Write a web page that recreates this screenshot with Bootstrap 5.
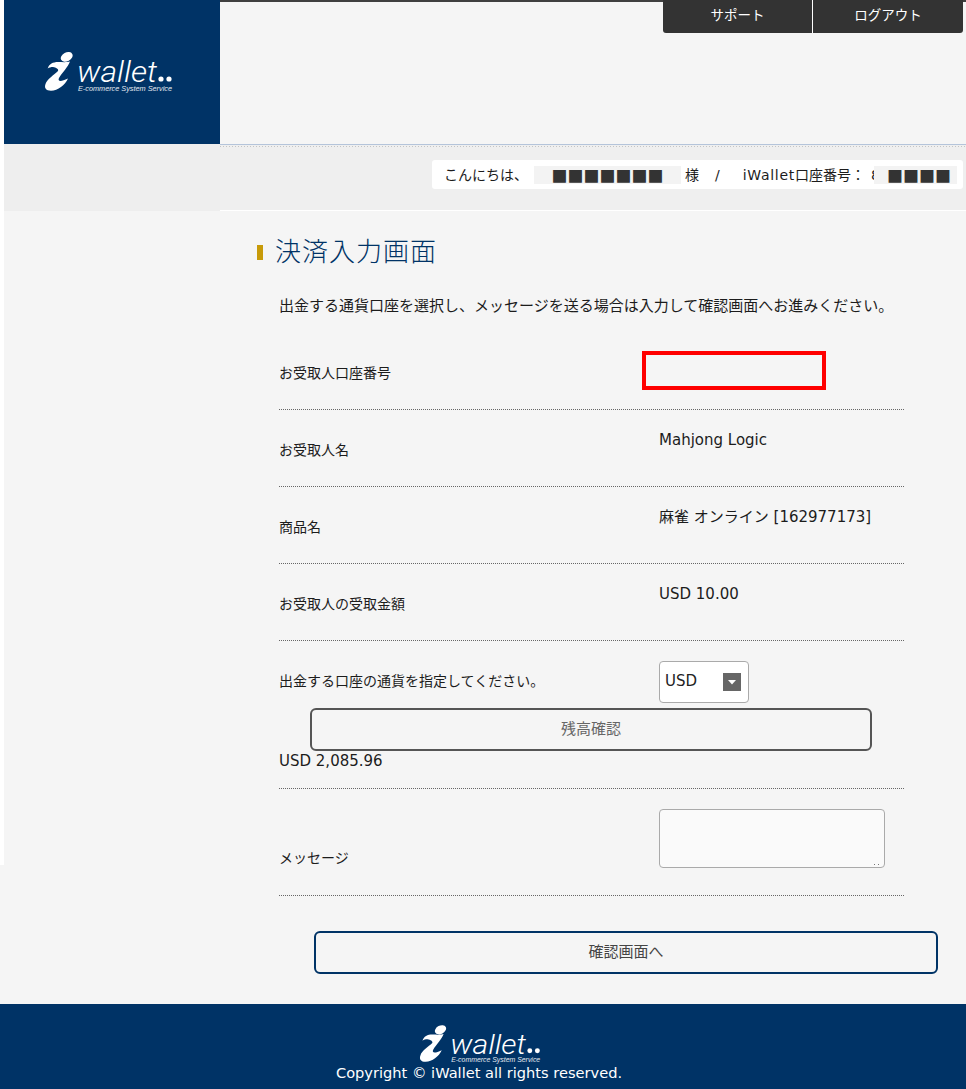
<!DOCTYPE html>
<html lang="ja">
<head>
<meta charset="utf-8">
<title>iWallet</title>
<link href="https://cdn.jsdelivr.net/npm/bootstrap@5.3.0/dist/css/bootstrap.min.css" rel="stylesheet">
<style>
body{background:#f5f5f5;color:#1c1c1c;font-family:"DejaVu Sans","Noto Sans CJK JP",sans-serif;font-size:14px;line-height:20px;position:relative;overflow-x:hidden}
.side-strip{position:absolute;left:0;top:0;width:4px;height:865px;background:#fff}
.logo-box{width:216px;height:144px;margin-left:4px;background:#003366;flex:none}
.logo-box svg{margin:52px 0 0 40px;display:block}
.head-right{border-top:2px solid #404040;height:144px}
.top-btn{width:150px;margin-top:-2px;padding:0;background:#333;color:#fff;border:0;border-radius:0;font-size:13.5px;line-height:31px}
.top-btn:hover{background:#333;color:#fff}
.top-btn:first-child{border-bottom-left-radius:3px;border-right:1px solid #fff}
.top-btn:last-child{border-bottom-right-radius:3px}
.top-btns{height:33px;padding-right:3px}
.top-btns .top-btn{height:33px}
.greet-side{width:216px;margin-left:4px;background:#eee;flex:none}
.greet-main{border-top:1px solid #b4c4da;height:67px;background:repeating-linear-gradient(90deg,#c4c4c4 0 1px,transparent 1px 3px) 0 1px/100% 1px no-repeat,#efefef;border-bottom:1px solid #fff;padding:15px 3px 0 0}
.greet-pill{background:#fff;border-radius:3px;width:531px;height:29px;padding-left:12px;font-size:14px;line-height:28px;white-space:nowrap;overflow:hidden;display:flex;align-items:center}
.mask{display:block;background:#f3f3f3;color:#333;line-height:18px;height:18px;font-size:16px;font-family:"Noto Sans CJK JP",sans-serif;text-align:center;flex:none}
.mask-a{width:147px;margin:0 4px 0 6px}
.mask-b{width:83px;padding-left:7px}
.slash{margin:0 23px 0 16px}
.brand-acct{letter-spacing:.7px}
.cut-digit{display:block;width:3px;overflow:hidden;margin-left:6px}
.content-area{padding-left:257px}
.page-title{display:flex;align-items:center;margin:0;height:30px;margin-top:26px;font-size:26px;font-weight:300;color:#003366;line-height:30px;letter-spacing:1px}
.page-title::before{content:"";width:6px;height:15px;background:#c79a08;margin-right:12px}
.intro{margin:29px 0 0 22px;font-size:15px;line-height:20px;white-space:nowrap;height:37px}
.form-rows{margin-left:22px;width:625px}
.f-row{display:flex;border-bottom:1px dotted #666;height:77px}
.f-row.tall{height:148px;display:block}
.f-row.msg{height:107px}
.f-label{width:380px;flex:none;padding-top:30px}
.msg .f-label{padding-top:59px}
.f-value{padding-top:20px;font-size:15px}
.red-box{width:184px;height:39px;border:4px solid #f00;margin:-2px 0 0 -17px}
.amount-sel{width:90px;height:42px;font-size:15px;padding:0 0 2px 5px;border:1px solid #aaa;border-radius:4px;background-color:#fff;background-position:right 7px center;background-size:18px 18px;background-image:url("data:image/svg+xml,%3csvg xmlns='http://www.w3.org/2000/svg' viewBox='0 0 18 18'%3e%3crect width='18' height='18' fill='%23666'/%3e%3cpath d='M5 7h8l-4 4.5z' fill='%23fff'/%3e%3c/svg%3e");color:#222}
.check-btn{display:block;width:562px;height:43px;margin:5px 0 0 31px;background:transparent;border:2px solid #555;border-radius:6px;color:#666;font-size:15px;padding:0}
.bal-amt{font-size:15px}
.note-wrap{position:relative;width:226px}
.note-wrap::after{content:"";position:absolute;right:6px;bottom:3px;width:1px;height:1px;background:#777;box-shadow:-4px 0 #777}
.note-box{width:226px;height:59px;background:#fafafa;border:1px solid #aaa;border-radius:4px;padding:4px;resize:none}
.go-wrap{padding:35px 0 30px 314px}
.go-btn{display:block;width:624px;height:43px;background:transparent;border:2px solid #003366;border-radius:6px;color:#444;font-size:15px;padding:0}
.site-foot{background:#003366;height:85px;color:#fff;text-align:center;padding-top:21px;font-size:14.6px;line-height:20px}
.site-foot svg{display:block;margin:0 auto -2px 419px}
.copy-line{padding-right:8px}
.logo-w{font-family:Roboto,"Liberation Sans",sans-serif;font-style:italic;font-weight:300;fill:#fff}
.logo-t{font-family:"Liberation Sans",sans-serif;font-style:italic;fill:#e4e9f0}
</style>
</head>
<body>
<div class="side-strip"></div>
<header class="d-flex">
  <div class="logo-box">
    <svg width="132" height="42" viewBox="0 0 132 42">
      <ellipse cx="22.7" cy="4.9" rx="6.3" ry="4.4" transform="rotate(-28 22.7 4.9)" fill="#fff"/>
      <path d="M3.7 16.5C5 12 9 10 14 10C18 10 23 10.5 26 9.5C24 15 18 21 15 26C13.5 29 16 30.5 24 26.5C21 33 14 38.7 7 38.7C2 38.7 0 36 1.5 32C3 27 10 23 14 19C15 17 12 15.5 9 15C7 15 5 15.5 3.7 16.5Z" fill="#fff"/>
      <text class="logo-w" x="33" y="30" font-size="30" textLength="80" lengthAdjust="spacingAndGlyphs">wallet</text>
      <circle cx="117" cy="27" r="2.6" fill="#fff"/><circle cx="125" cy="27" r="2.6" fill="#fff"/>
      <text class="logo-t" x="34" y="39" font-size="8" textLength="94" lengthAdjust="spacingAndGlyphs">E-commerce System Service</text>
    </svg>
  </div>
  <div class="head-right flex-grow-1">
    <div class="top-btns d-flex justify-content-end">
      <a class="btn top-btn" href="#">サポート</a>
      <a class="btn top-btn" href="#">ログアウト</a>
    </div>
  </div>
</header>
<div class="d-flex">
  <div class="greet-side"></div>
  <div class="greet-main flex-grow-1 d-flex justify-content-end">
    <div class="greet-pill"><span>こんにちは、</span><span class="mask mask-a">■■■■■■■</span><span>様</span><span class="slash">/</span><span class="brand-acct">iWallet</span><span>口座番号：</span><span class="cut-digit">8</span><span class="mask mask-b">■■■■</span></div>
  </div>
</div>
<main class="content-area">
  <h1 class="page-title">決済入力画面</h1>
  <p class="intro">出金する通貨口座を選択し、メッセージを送る場合は入力して確認画面へお進みください。</p>
  <div class="form-rows">
    <div class="f-row">
      <div class="f-label">お受取人口座番号</div>
      <div class="f-value"><div class="red-box"></div></div>
    </div>
    <div class="f-row">
      <div class="f-label">お受取人名</div>
      <div class="f-value">Mahjong Logic</div>
    </div>
    <div class="f-row">
      <div class="f-label">商品名</div>
      <div class="f-value">麻雀 オンライン [162977173]</div>
    </div>
    <div class="f-row">
      <div class="f-label">お受取人の受取金額</div>
      <div class="f-value">USD 10.00</div>
    </div>
    <div class="f-row tall">
      <div class="d-flex">
        <div class="f-label">出金する口座の通貨を指定してください。</div>
        <div class="f-value"><select class="form-select amount-sel"><option>USD</option></select></div>
      </div>
      <button type="button" class="btn check-btn">残高確認</button>
      <div class="bal-amt">USD 2,085.96</div>
    </div>
    <div class="f-row msg">
      <div class="f-label">メッセージ</div>
      <div class="f-value"><div class="note-wrap"><textarea class="note-box d-block"></textarea></div></div>
    </div>
  </div>
</main>
<div class="go-wrap"><button type="button" class="btn go-btn">確認画面へ</button></div>
<footer class="site-foot">
  <svg width="125" height="40" viewBox="0 0 132 42">
    <ellipse cx="22.7" cy="4.9" rx="6.3" ry="4.4" transform="rotate(-28 22.7 4.9)" fill="#fff"/>
    <path d="M3.7 16.5C5 12 9 10 14 10C18 10 23 10.5 26 9.5C24 15 18 21 15 26C13.5 29 16 30.5 24 26.5C21 33 14 38.7 7 38.7C2 38.7 0 36 1.5 32C3 27 10 23 14 19C15 17 12 15.5 9 15C7 15 5 15.5 3.7 16.5Z" fill="#fff"/>
    <text class="logo-w" x="33" y="30" font-size="30" textLength="80" lengthAdjust="spacingAndGlyphs">wallet</text>
    <circle cx="117" cy="27" r="2.6" fill="#fff"/><circle cx="125" cy="27" r="2.6" fill="#fff"/>
    <text class="logo-t" x="34" y="39" font-size="8" textLength="94" lengthAdjust="spacingAndGlyphs">E-commerce System Service</text>
  </svg>
  <div class="copy-line">Copyright © iWallet all rights reserved.</div>
</footer>
<script src="https://cdn.jsdelivr.net/npm/bootstrap@5.3.0/dist/js/bootstrap.bundle.min.js"></script>
</body>
</html>
